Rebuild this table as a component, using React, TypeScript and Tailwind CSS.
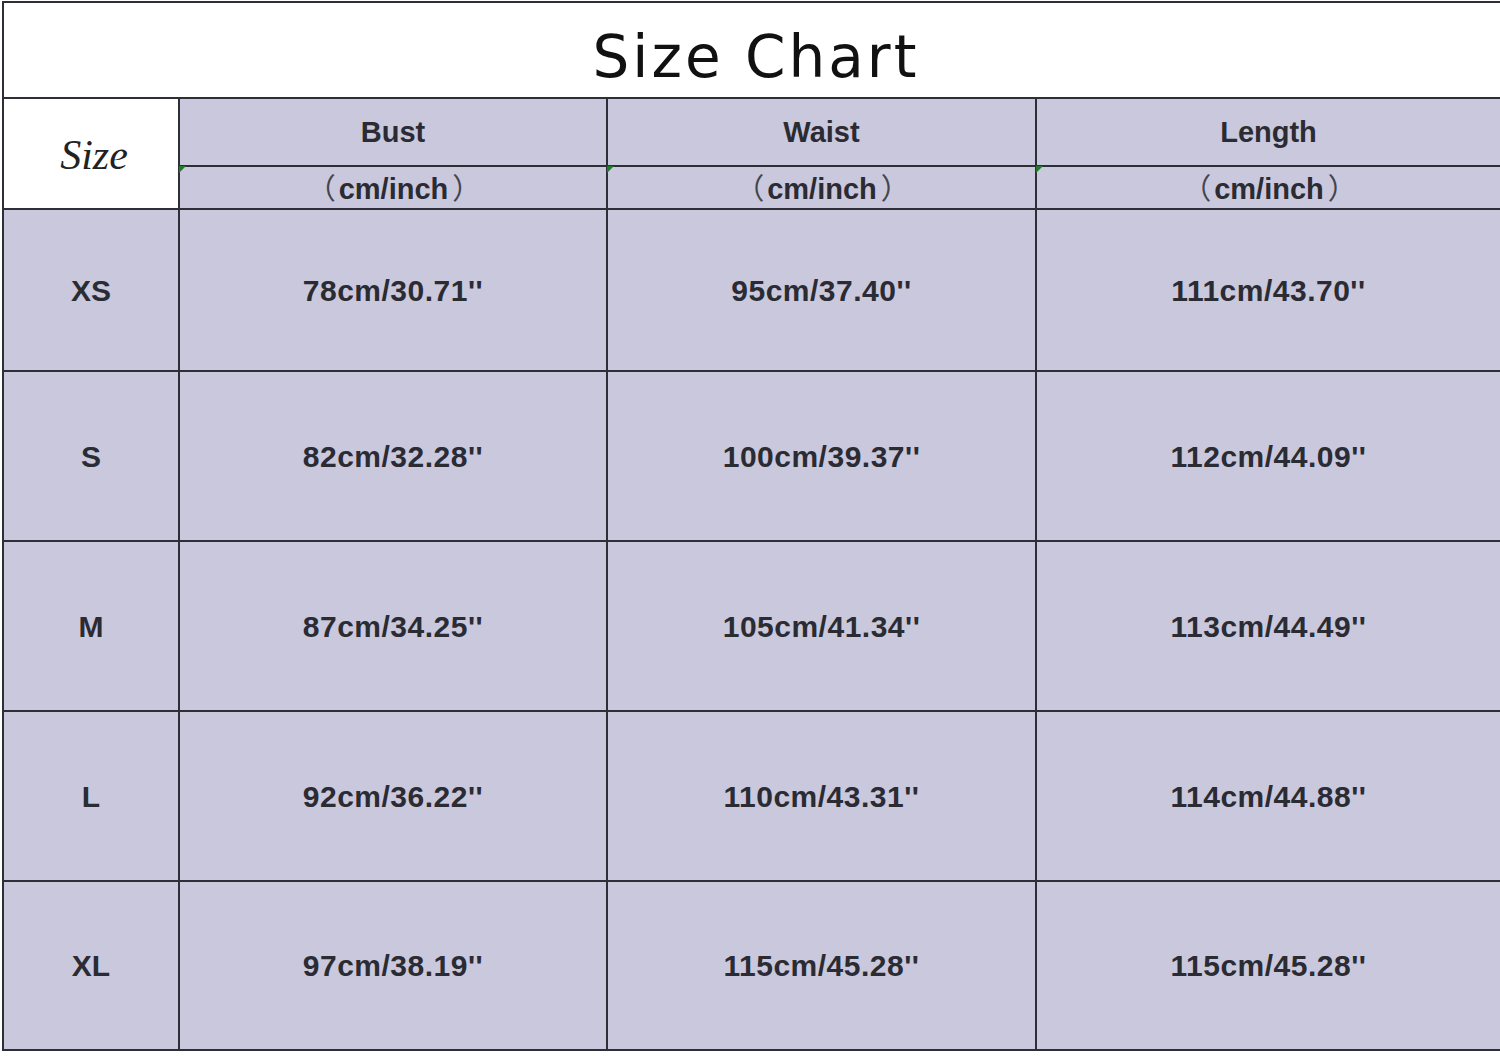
import React from "react";

const rows = [
  { size: "XS", bust: "78cm/30.71''", waist: "95cm/37.40''", length: "111cm/43.70''", h: "h-[162px]" },
  { size: "S", bust: "82cm/32.28''", waist: "100cm/39.37''", length: "112cm/44.09''", h: "h-[170px]" },
  { size: "M", bust: "87cm/34.25''", waist: "105cm/41.34''", length: "113cm/44.49''", h: "h-[170px]" },
  { size: "L", bust: "92cm/36.22''", waist: "110cm/43.31''", length: "114cm/44.88''", h: "h-[170px]" },
  { size: "XL", bust: "97cm/38.19''", waist: "115cm/45.28''", length: "115cm/45.28''", h: "h-[169px]" },
];

const cell = "border-r-2 border-b-2 border-[#2e2e36] flex items-center justify-center";
const last = "border-b-2 border-[#2e2e36] flex items-center justify-center";
const bold = "font-['Liberation_Sans',Arial,sans-serif] font-bold text-[#2b2b33]";
const paren = "font-['Noto_Sans_CJK_SC',sans-serif] font-normal text-[#44444c]";

function Marker() {
  // little green comment marker from the spreadsheet
  return (
    <span className="absolute -left-[1px] -top-[1px] w-0 h-0 border-t-[7px] border-r-[7px] border-t-[#1f7a2a] border-r-transparent" />
  );
}

export default function App() {
  return (
    <div className="w-[1500px] h-[1056px] bg-white pt-[1px] pl-[2px] overflow-hidden">
      <div className="grid grid-cols-[176px_428px_429px_1fr] border-l-2 border-t-2 border-[#2e2e36]">
        <div className={`${last} col-span-4 h-[96px] bg-white`}>
          <span className="font-['DejaVu_Sans',sans-serif] text-[58px] tracking-[3px] text-[#111] leading-none pt-[14px] pl-[8px]">
            Size Chart
          </span>
        </div>

        <div className={`${cell} row-span-2 bg-white`}>
          <span className="font-['Liberation_Serif',serif] italic text-[42px] text-[#222] pt-[4px] pl-[6px]">Size</span>
        </div>
        {["Bust", "Waist", "Length"].map((t, i) => (
          <div key={t} className={`${i === 2 ? last : cell} h-[68px] bg-[#c9c8dc]`}>
            <span className={`${bold} text-[29px] pt-[1px]`}>{t}</span>
          </div>
        ))}
        {[0, 1, 2].map((i) => (
          <div key={i} className={`${i === 2 ? last : cell} relative h-[43px] bg-[#c9c8dc]`}>
            <Marker />
            <span className={`${bold} text-[29px] leading-none pl-[2px]`}>
              <span className={`${paren} mr-[3px]`}>（</span>
              cm/inch
              <span className={`${paren} ml-[4px]`}>）</span>
            </span>
          </div>
        ))}

        {rows.map((r) => (
          <React.Fragment key={r.size}>
            <div className={`${cell} ${r.h} bg-[#c9c8dc]`}>
              <span className={`${bold} text-[30px]`}>{r.size}</span>
            </div>
            <div className={`${cell} ${r.h} bg-[#c9c8dc]`}>
              <span className={`${bold} text-[30px] tracking-[0.5px]`}>{r.bust}</span>
            </div>
            <div className={`${cell} ${r.h} bg-[#c9c8dc]`}>
              <span className={`${bold} text-[30px] tracking-[0.5px]`}>{r.waist}</span>
            </div>
            <div className={`${last} ${r.h} bg-[#c9c8dc]`}>
              <span className={`${bold} text-[30px] tracking-[0.5px]`}>{r.length}</span>
            </div>
          </React.Fragment>
        ))}
      </div>
    </div>
  );
}
